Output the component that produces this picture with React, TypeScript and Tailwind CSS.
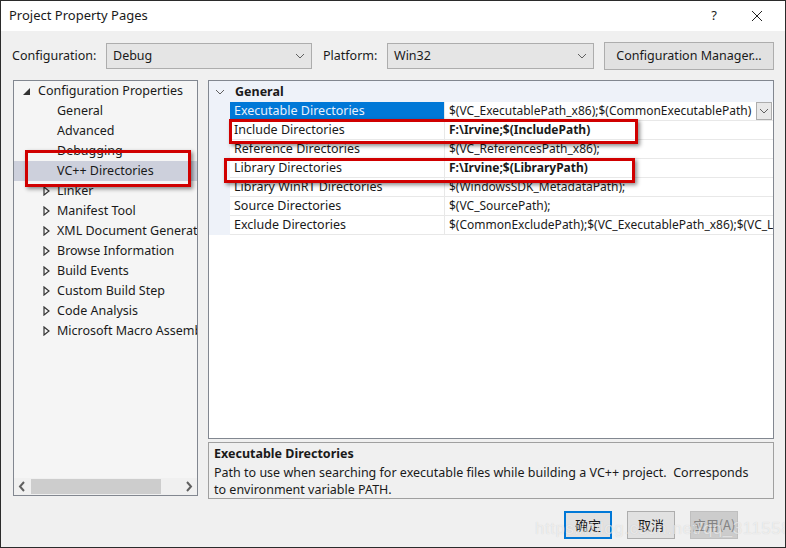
import React from 'react';

const font = { fontFamily: '"Noto Sans", "Noto Sans CJK SC", sans-serif' };

const treeChildren: { label: string; expandable: boolean }[] = [
  { label: 'General', expandable: false },
  { label: 'Advanced', expandable: false },
  { label: 'Debugging', expandable: false },
  { label: 'VC++ Directories', expandable: false },
  { label: 'Linker', expandable: true },
  { label: 'Manifest Tool', expandable: true },
  { label: 'XML Document Generator', expandable: true },
  { label: 'Browse Information', expandable: true },
  { label: 'Build Events', expandable: true },
  { label: 'Custom Build Step', expandable: true },
  { label: 'Code Analysis', expandable: true },
  { label: 'Microsoft Macro Assembler', expandable: true },
];

const props: { name: string; value: string; bold?: boolean }[] = [
  { name: 'Executable Directories', value: '$(VC_ExecutablePath_x86);$(CommonExecutablePath)' },
  { name: 'Include Directories', value: 'F:\\Irvine;$(IncludePath)', bold: true },
  { name: 'Reference Directories', value: '$(VC_ReferencesPath_x86);' },
  { name: 'Library Directories', value: 'F:\\Irvine;$(LibraryPath)', bold: true },
  { name: 'Library WinRT Directories', value: '$(WindowsSDK_MetadataPath);' },
  { name: 'Source Directories', value: '$(VC_SourcePath);' },
  { name: 'Exclude Directories', value: '$(CommonExcludePath);$(VC_ExecutablePath_x86);$(VC_LibraryPath_x86)' },
];

const Chevron = ({ className = '' }: { className?: string }) => (
  <svg width="10" height="6" viewBox="0 0 10 6" className={className}>
    <path d="M1 1 L5 5 L9 1" fill="none" stroke="#606060" strokeWidth="1" />
  </svg>
);

const Select = ({ value, width }: { value: string; width: string }) => (
  <div className={`${width} h-[26px] border border-[#adadad] bg-[#e5e5e5] flex items-center justify-between pl-[6px] pr-[6px]`}>
    <span>{value}</span>
    <Chevron />
  </div>
);

const HollowTri = () => (
  <svg width="7" height="10" viewBox="0 0 7 10">
    <path d="M1 1 L6 5 L1 9 Z" fill="none" stroke="#333" strokeWidth="1.2" />
  </svg>
);

export default function App() {
  return (
    <div
      className="w-[786px] h-[548px] border border-[#2b2b2b] bg-[#f0f0f0] flex flex-col text-[12.5px] text-[#1a1a1a] relative overflow-hidden"
      style={font}
    >
      {/* title bar */}
      <div className="h-[30px] bg-white flex items-center pl-[8px] shrink-0 text-[13px]">
        <span className="flex-1">Project Property Pages</span>
        <span className="w-[14px] text-center mr-[30px]">?</span>
        <svg width="12" height="12" viewBox="0 0 12 12" className="mr-[22px]">
          <path d="M1 1 L11 11 M11 1 L1 11" stroke="#222" strokeWidth="1" />
        </svg>
      </div>

      {/* configuration row */}
      <div className="flex items-center mt-[11px] pl-[11px] h-[28px]">
        <span className="w-[94px]">Configuration:</span>
        <Select value="Debug" width="w-[206px]" />
        <span className="ml-[11px] w-[64px]">Platform:</span>
        <Select value="Win32" width="w-[207px]" />
        <div className="ml-[10px] w-[170px] h-[28px] border border-[#adadad] bg-[#e1e1e1] flex items-center justify-center">
          Configuration Manager...
        </div>
      </div>

      <div className="flex mt-[10px] pl-[12px]">
        {/* tree */}
        <div className="w-[185px] h-[416px] border border-[#828790] bg-[#f5f5f5] flex flex-col relative">
          <div className="flex-1 overflow-hidden">
            <div className="h-[20px] flex items-center whitespace-nowrap">
              <svg width="7" height="7" viewBox="0 0 7 7" className="ml-[9px] mr-[8px]">
                <path d="M7 0 L7 7 L0 7 Z" fill="#333" />
              </svg>
              <span>Configuration Properties</span>
            </div>
            {treeChildren.map((c) => (
              <div
                key={c.label}
                className={`h-[20px] flex items-center whitespace-nowrap ${c.label === 'VC++ Directories' ? 'bg-[#cdd0dc]' : ''}`}
              >
                <span className="w-[43px] flex justify-end pr-[7px] shrink-0">
                  {c.expandable ? <HollowTri /> : null}
                </span>
                <span>{c.label}</span>
              </div>
            ))}
          </div>
          <div className="h-[17px] flex items-center bg-[#f0f0f0] shrink-0">
            <svg width="17" height="17" viewBox="0 0 17 17">
              <path d="M10 4 L6 8.5 L10 13" fill="none" stroke="#606060" strokeWidth="2" />
            </svg>
            <div className="w-[130px] h-[15px] bg-[#cdcdcd]" />
            <div className="flex-1" />
            <svg width="17" height="17" viewBox="0 0 17 17">
              <path d="M7 4 L11 8.5 L7 13" fill="none" stroke="#606060" strokeWidth="2" />
            </svg>
          </div>
        </div>

        <div className="ml-[10px] flex flex-col">
          {/* property grid */}
          <div className="w-[566px] h-[359px] border border-[#828790] bg-white flex flex-col overflow-hidden">
            <div className="h-[21px] pt-[1px] bg-[#eef2f9] flex items-center shrink-0">
              <Chevron className="ml-[6px] mr-[10px]" />
              <span className="font-bold">General</span>
            </div>
            {props.map((p, i) => (
              <div key={p.name} className="h-[19px] flex shrink-0">
                <div className="w-[21px] bg-[#eef2f9] shrink-0" />
                <div
                  className={`w-[215px] shrink-0 pl-[4px] flex items-center whitespace-nowrap border-b border-r border-[#e8e8e8] ${i === 0 ? 'bg-[#0078d7] text-[#e8f1fb]' : ''}`}
                >
                  {p.name}
                </div>
                <div className="flex-1 pl-[4px] flex items-center whitespace-nowrap overflow-hidden border-b border-[#e8e8e8] relative text-[12px]">
                  <span className={p.bold ? 'font-bold' : ''}>{p.value}</span>
                  {i === 0 ? (
                    <div className="absolute right-[1px] top-0 w-[16px] h-[18px] border border-[#adadad] bg-[#e8e8e8] flex items-center justify-center">
                      <Chevron />
                    </div>
                  ) : null}
                </div>
              </div>
            ))}
          </div>

          {/* description */}
          <div className="w-[566px] h-[57px] mt-[3px] border border-[#a0a0a0] pl-[5px] pt-[2px] leading-[17px]">
            <div className="font-bold h-[17px]">Executable Directories</div>
            <div className="mt-[2px]">Path to use when searching for executable files while building a VC++ project.&nbsp; Corresponds</div>
            <div>to environment variable PATH.</div>
          </div>
        </div>
      </div>

      {/* buttons */}
      <div className="flex justify-end mt-[12px] pr-[47px] gap-[15px] text-[13px]" style={{ fontFamily: '"Noto Sans CJK SC", sans-serif' }}>
        <div className="w-[48px] h-[28px] border-2 border-[#0078d7] bg-[#e1e1e1] flex items-center justify-center">确定</div>
        <div className="w-[48px] h-[28px] border border-[#adadad] bg-[#e1e1e1] flex items-center justify-center">取消</div>
        <div className="w-[48px] h-[28px] border border-[#bfbfbf] bg-[#cccccc] text-[#838383] flex items-center justify-center">应用(A)</div>
      </div>

      {/* annotations */}
      <div className="absolute left-[24px] top-[149px] w-[166px] h-[37px] border-[3px] border-[#d00000] shadow-[2px_2px_4px_rgba(0,0,0,0.45)]" />
      <div className="absolute left-[228px] top-[118px] w-[409px] h-[25px] border-[3px] border-[#d00000] shadow-[2px_2px_4px_rgba(0,0,0,0.45)]" />
      <div className="absolute left-[223px] top-[157px] w-[411px] h-[25px] border-[3px] border-[#d00000] shadow-[2px_2px_4px_rgba(0,0,0,0.45)]" />

      {/* watermark */}
      <div className="absolute left-[534px] top-[515px] text-[17px] text-white/60 tracking-[0.5px] pointer-events-none" style={{ fontFamily: '"Liberation Sans", sans-serif', textShadow: '0 0 1px rgba(0,0,0,0.15)' }}>
        https://blog.csdn.net/qq_31155883
      </div>
    </div>
  );
}
